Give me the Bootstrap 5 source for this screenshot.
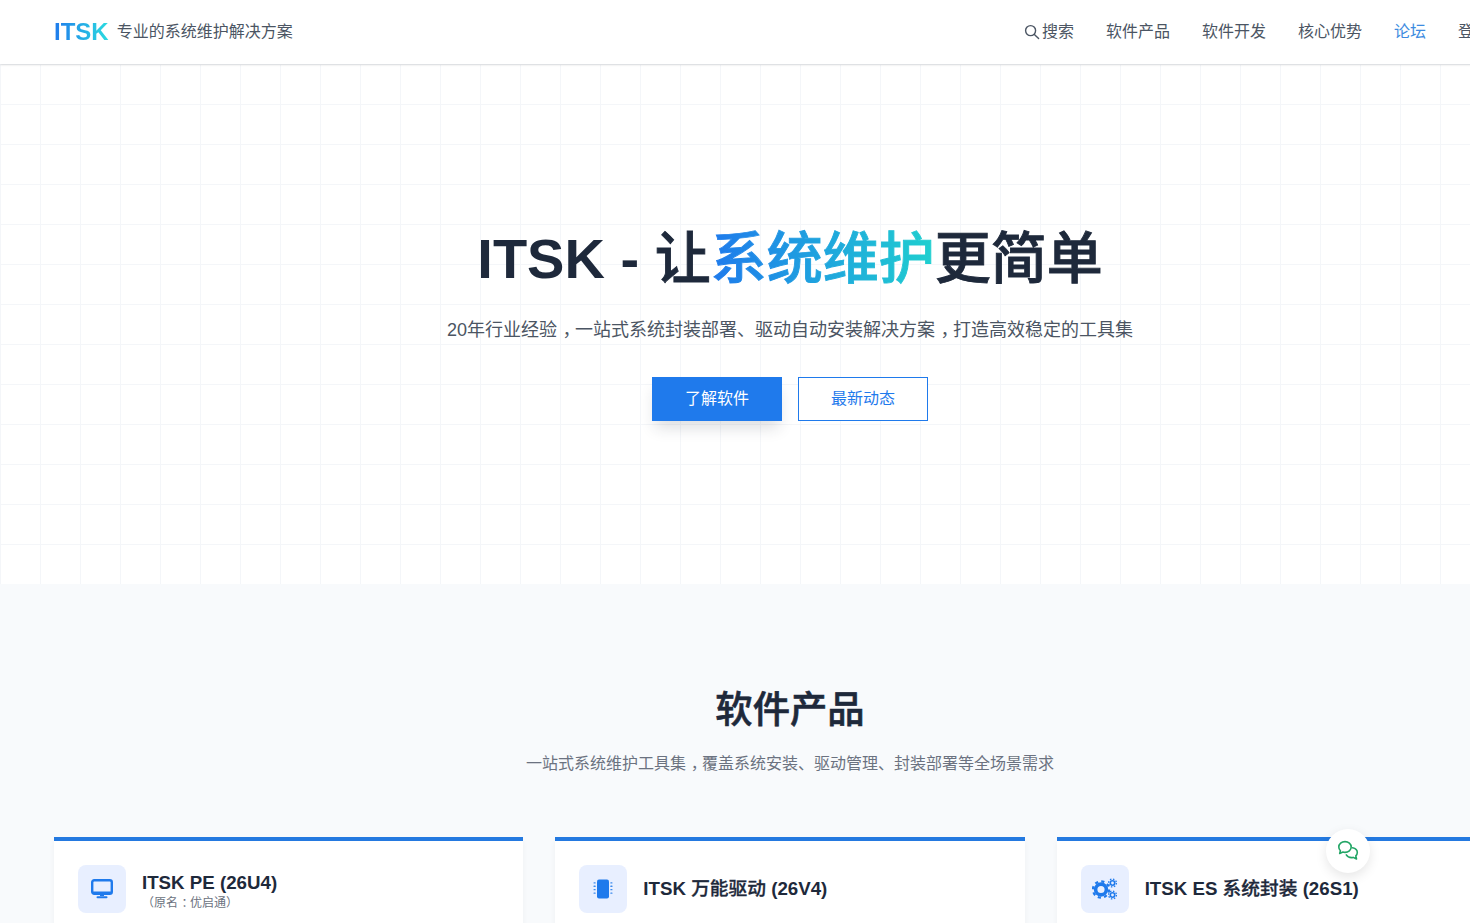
<!DOCTYPE html>
<html lang="zh-CN">
<head>
  <meta charset="UTF-8">
  <meta name="viewport" content="width=device-width, initial-scale=1">
  <title>ITSK - 专业的系统维护解决方案</title>

  <!-- Bootstrap CSS -->
  <link href="https://cdn.jsdelivr.net/npm/bootstrap@5.3.0/dist/css/bootstrap.min.css" rel="stylesheet">

  <style>
    html, body { height: 100%; overflow: hidden; }
    body { font-family: "Liberation Sans", "Noto Sans CJK SC", sans-serif; color: #1e293b; background: #fff; }
    .page-wrap { width: 1580px; }
    .side-pad { padding-left: 54px; padding-right: 54px; }
    /* half-width punctuation, padded back to a full cell so it sits in the middle */
    .mid-punct { font-feature-settings: "halt"; padding: 0 .2em 0 .3em; }

    .top-bar { height: 64px; background: #fff; position: relative; z-index: 2; box-shadow: 0 1px 2px rgba(0, 0, 0, .12); }
    .brand-mark { font-size: 24px; font-weight: 700; line-height: 1; background: linear-gradient(90deg, #1f7aec, #2bdce0); -webkit-background-clip: text; background-clip: text; color: transparent; }
    .brand-tag { font-size: 16px; color: #4b5563; margin-left: 8px; }
    .top-links { gap: 32px; }
    .top-links a { color: #4b5563; font-size: 16px; text-decoration: none; }
    .top-links a.is-active { color: #3d8be0; }
    .top-links .last-link { width: 68px; }
    .search-glyph { margin-right: 2px; }

    .hero-band { height: 520px; padding-bottom: 2px; background-color: #fff;
      background-image: linear-gradient(#f4f6f9 1px, transparent 1px), linear-gradient(90deg, #f4f6f9 1px, transparent 1px);
      background-size: 40px 40px; }
    .hero-title { font-size: 56px; font-weight: 700; line-height: 1.2; color: #1e293b; margin-bottom: 25px; }
    .hero-title .soft-cjk { font-weight: 500; -webkit-text-stroke: .9px #1e293b; }
    .hero-title .hero-grad { background: linear-gradient(90deg, #1f7aec, #1fd0cf); -webkit-background-clip: text; background-clip: text; color: transparent; -webkit-text-stroke: .9px transparent; }
    .hero-sub { font-size: 18px; color: #4b5563; margin-bottom: 33px; line-height: 27px; }
    .hero-btn { width: 130px; height: 44px; font-size: 16px; border-radius: 0; display: inline-flex; align-items: center; justify-content: center; padding: 0; }
    .hero-btn-main { background: #1f7aec; border: 1px solid #1f7aec; color: #fff; box-shadow: 0 10px 15px -3px rgba(31, 41, 55, .15); }
    .hero-btn-line { background: #fff; border: 1px solid #1f7aec; color: #1f7aec; }

    .product-band { background: #f8fafc; padding-top: 104px; height: 400px; }
    .band-title { font-size: 37.33px; font-weight: 500; line-height: 45px; color: #1e293b; margin-bottom: 19px; -webkit-text-stroke: .6px #1e293b; }
    .band-sub { font-size: 16px; color: #6b7280; line-height: 24px; margin-bottom: 61px; }
    .product-row { --bs-gutter-x: 32px; }
    .product-box { background: #fff; border-top: 4px solid #2479e0; padding: 24px; height: 240px; box-shadow: 0 4px 6px rgba(0, 0, 0, .04); }
    .icon-tile { width: 48px; height: 48px; border-radius: 8px; background: #e8efff; color: #1f7aec; flex: none; }
    .product-name { font-size: 18.72px; font-weight: 700; line-height: 24px; color: #1e293b; margin: 0; }
    .product-name .soft-cjk { font-weight: 500; -webkit-text-stroke: .3px #1e293b; }
    .product-old { font-size: 12px; color: #6b7280; line-height: 16px; display: block; }

    .chat-float { position: fixed; left: 1326px; top: 829px; width: 44px; height: 44px; border-radius: 50%; background: #fff; color: #22a565; box-shadow: 0 4px 12px rgba(0, 0, 0, .1); z-index: 5; }
  </style>
</head>
<body>
<div class="page-wrap">

  <!-- Navbar -->
  <nav class="top-bar d-flex align-items-center side-pad">
    <span class="brand-mark">ITSK</span>
    <span class="brand-tag">专业的系统维护解决方案</span>
    <div class="top-links d-flex align-items-center ms-auto">
      <a href="#" class="d-flex align-items-center">
        <svg width="16" height="16" viewBox="0 0 16 16" fill="none" stroke="currentColor" stroke-width="1.4" stroke-linecap="round" class="search-glyph"><circle cx="6.6" cy="6.6" r="5"/><path d="M10.4 10.4 14.6 14.6"/></svg>搜索
      </a>
      <a href="#">软件产品</a>
      <a href="#">软件开发</a>
      <a href="#">核心优势</a>
      <a href="#" class="is-active">论坛</a>
      <a href="#" class="last-link">登录</a>
    </div>
  </nav>

  <!-- Hero -->
  <section class="hero-band d-flex flex-column align-items-center justify-content-center text-center">
    <h1 class="hero-title">ITSK - <span class="soft-cjk">让<span class="hero-grad">系统维护</span>更简单</span></h1>
    <p class="hero-sub">20年行业经验<span class="mid-punct">，</span>一站式系统封装部署、驱动自动安装解决方案<span class="mid-punct">，</span>打造高效稳定的工具集</p>
    <div class="d-flex gap-3">
      <a href="#" class="btn hero-btn hero-btn-main">了解软件</a>
      <a href="#" class="btn hero-btn hero-btn-line">最新动态</a>
    </div>
  </section>

  <!-- Products -->
  <section class="product-band side-pad">
    <h2 class="band-title text-center">软件产品</h2>
    <p class="band-sub text-center">一站式系统维护工具集<span class="mid-punct">，</span>覆盖系统安装、驱动管理、封装部署等全场景需求</p>
    <div class="row row-cols-3 product-row">
      <div class="col">
        <div class="product-box">
          <div class="d-flex align-items-center gap-3">
            <div class="icon-tile d-flex align-items-center justify-content-center">
              <svg width="22" height="20" viewBox="0 0 22 20" fill="none"><rect x="1.200" y="1.200" width="19.600" height="13.600" rx="2" stroke="currentColor" stroke-width="2.400"/><path d="M1 12.500h20V13a2 2 0 0 1-2 2H3a2 2 0 0 1-2-2z" fill="currentColor"/><path d="M9 15h4v2H9z" fill="currentColor"/><rect x="5.500" y="17.200" width="11" height="2" rx="1" fill="currentColor"/></svg>
            </div>
            <div class="pt-1">
              <h3 class="product-name">ITSK PE (26U4)</h3>
              <span class="product-old">（原名<span class="mid-punct">：</span>优启通）</span>
            </div>
          </div>
        </div>
      </div>
      <div class="col">
        <div class="product-box">
          <div class="d-flex align-items-center gap-3">
            <div class="icon-tile d-flex align-items-center justify-content-center">
              <svg width="20" height="20" viewBox="0 0 20 20" fill="currentColor"><rect x="4" y="0.5" width="12" height="19" rx="2"/><g opacity=".85"><rect x="0.5" y="3.200" width="2.200" height="1.300" rx=".5"/><rect x="0.5" y="6.600" width="2.200" height="1.300" rx=".5"/><rect x="0.5" y="10" width="2.200" height="1.300" rx=".5"/><rect x="0.5" y="13.400" width="2.200" height="1.300" rx=".5"/><rect x="17.300" y="3.200" width="2.200" height="1.300" rx=".5"/><rect x="17.300" y="6.600" width="2.200" height="1.300" rx=".5"/><rect x="17.300" y="10" width="2.200" height="1.300" rx=".5"/><rect x="17.300" y="13.400" width="2.200" height="1.300" rx=".5"/></g></svg>
            </div>
            <h3 class="product-name">ITSK <span class="soft-cjk">万能驱动</span> (26V4)</h3>
          </div>
        </div>
      </div>
      <div class="col">
        <div class="product-box">
          <div class="d-flex align-items-center gap-3">
            <div class="icon-tile d-flex align-items-center justify-content-center">
              <svg width="26" height="22" viewBox="0 0 26 22" fill="none" stroke="currentColor">
                <circle cx="9" cy="11.500" r="5.400" stroke-width="3.600"/>
                <circle cx="9" cy="11.500" r="8.100" stroke-width="2.200" stroke-dasharray="3.200 3.160"/>
                <circle cx="20.500" cy="5" r="2.200" stroke-width="1.600"/>
                <circle cx="20.500" cy="5" r="3.900" stroke-width="1.300" stroke-dasharray="1.500 1.560"/>
                <circle cx="20.500" cy="17" r="2.200" stroke-width="1.600"/>
                <circle cx="20.500" cy="17" r="3.900" stroke-width="1.300" stroke-dasharray="1.500 1.560"/>
              </svg>
            </div>
            <h3 class="product-name">ITSK ES <span class="soft-cjk">系统封装</span> (26S1)</h3>
          </div>
        </div>
      </div>
    </div>
  </section>
</div>

<!-- Floating chat button -->
<a href="#" class="chat-float d-flex align-items-center justify-content-center">
  <svg width="22" height="22" viewBox="0 0 22 22" fill="none" stroke="currentColor" stroke-width="1.6" stroke-linejoin="round" stroke-linecap="round">
    <path d="M8 1.600c-3.400 0-6.200 2.400-6.200 5.400 0 1.400.6 2.700 1.600 3.700l-.7 2.700 3.200-1.300c.7.2 1.400.3 2.100.3 3.400 0 6.200-2.400 6.200-5.400S11.400 1.600 8 1.600z"/>
    <path d="M15.600 7.800c2.700.5 4.700 2.400 4.700 4.800 0 1.300-.6 2.400-1.500 3.200l.7 3.200-3.300-1.600c-.6.1-1.100.2-1.700.2-2.300 0-4.300-1.100-5.200-2.700"/>
  </svg>
</a>

<script src="https://cdn.jsdelivr.net/npm/bootstrap@5.3.0/dist/js/bootstrap.bundle.min.js"></script>
</body>
</html>
